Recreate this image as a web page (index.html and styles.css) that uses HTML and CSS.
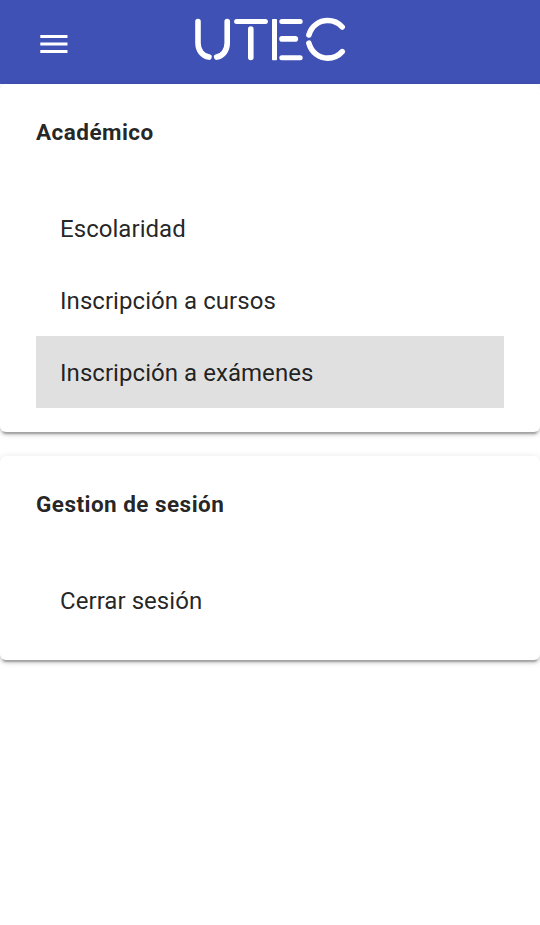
FILE: index.html
```html
<!DOCTYPE html>
<html lang="es">
<head>
<meta charset="utf-8">
<title>UTEC</title>
<link rel="stylesheet" href="styles.css">
</head>
<body>
<header class="toolbar">
  <button class="menu-button" aria-label="Menú">
    <svg width="36" height="36" viewBox="0 0 36 36" fill="#fff"><path d="M4.3 9h27.2v3H4.3zM4.3 16.5h27.2v3H4.3zM4.3 24h27.2v3H4.3z"/></svg>
  </button>
  <svg class="logo" width="152" height="46" viewBox="194 16 152 46" role="img" aria-label="UTEC">
    <g fill="none" stroke="#fff" stroke-width="5.6" stroke-linecap="round">
      <path d="M198 21.6V43C198 50.5 202.5 56 209 57.1"/>
      <path d="M227.2 21.6V43C227.2 50.5 222.8 56 216.7 57.1"/>
      <path d="M236.6 21.5H265.4" stroke-width="5"/>
      <path d="M250.8 29V57.5"/>
      <rect x="272" y="19" width="5" height="41.2" rx=".8" fill="#fff" stroke="none"/>
      <path d="M281.8 21.5H300.2M281.8 57.7H300.2" stroke-width="5"/>
      <path d="M282 38.9H295.3"/>
      <path d="M308.9 35C311.5 26 319 20.5 327.7 20.5Q336.5 20.5 342.2 27"/>
      <path d="M308.9 43.2C311.5 52.5 319 58.1 327.7 58.1Q336.5 58.1 342.2 51.6"/>
    </g>
  </svg>
</header>
<main>
  <section class="card">
    <h2 class="card-title">Académico</h2>
    <nav class="list">
      <a class="item">Escolaridad</a>
      <a class="item">Inscripción a cursos</a>
      <a class="item active">Inscripción a exámenes</a>
    </nav>
  </section>
  <section class="card">
    <h2 class="card-title">Gestion de sesión</h2>
    <nav class="list">
      <a class="item">Cerrar sesión</a>
    </nav>
  </section>
</main>
</body>
</html>
```
FILE: styles.css
```css
* { box-sizing: border-box; }
body {
  margin: 0;
  background: #fff;
  color: rgba(0, 0, 0, .87);
  font-family: Roboto, sans-serif;
}
.toolbar {
  display: grid;
  grid-template-columns: 1fr auto 1fr;
  height: 84px;
  padding: 0 36px;
  background: #3f51b5;
}
.menu-button {
  width: 36px;
  height: 36px;
  margin-top: 26px;
  padding: 0;
  border: 0;
  background: none;
}
.menu-button svg { display: block; }
.logo { margin-top: 16px; }
.card {
  margin-bottom: 24px;
  padding: 24px 36px;
  border-radius: 6px;
  background: #fff;
  box-shadow: 0 4.5px 1.5px -3px rgba(0, 0, 0, .2),
    0 3px 3px 0 rgba(0, 0, 0, .14),
    0 1.5px 7.5px 0 rgba(0, 0, 0, .12);
}
.card-title {
  margin: 0 0 24px;
  font-size: 22.5px;
  line-height: 48px;
  font-weight: 700;
  letter-spacing: .46px;
}
.list { padding-top: 12px; }
.item {
  display: flex;
  align-items: center;
  height: 72px;
  padding: 2px 24px 0;
  font-size: 24px;
  letter-spacing: .05px;
}
.active { background: #e0e0e0; }
```
